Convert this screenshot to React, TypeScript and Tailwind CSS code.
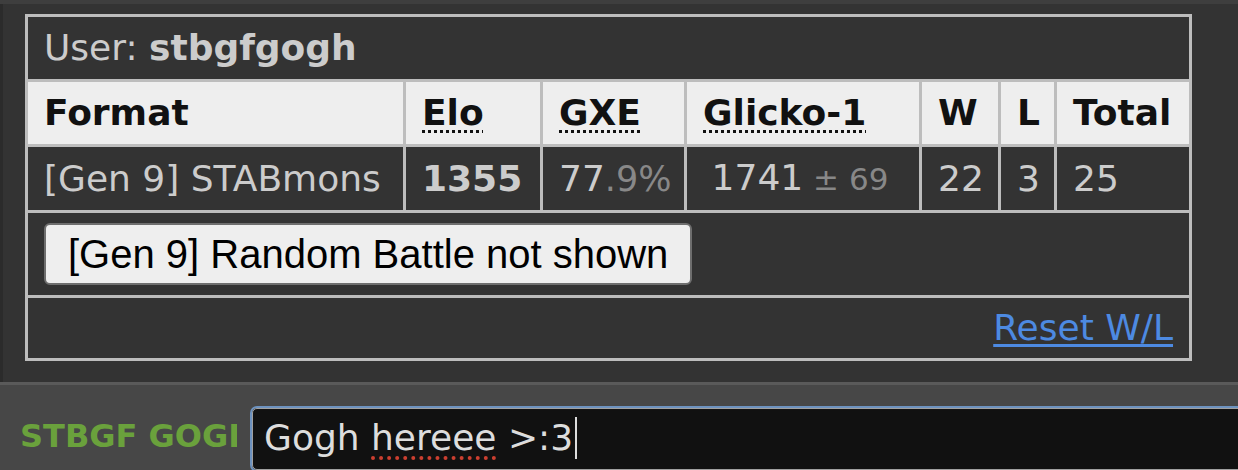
import React from "react";

const cols = [378, 137, 144, 235, 79, 56, 135];

function Abbr({ children }: { children: React.ReactNode }) {
  return (
    <span className="underline decoration-dotted decoration-[3px] underline-offset-[5px]">
      {children}
    </span>
  );
}

export default function App() {
  const th = "border-[3px] border-[#bdbdbd] bg-[#eeeeee] text-left font-bold text-[#111] pl-[16px] py-[10px]";
  const td = "border-[3px] border-[#bdbdbd] pl-[16px] py-[10px] whitespace-nowrap";

  return (
    <div className="h-[470px] w-[1238px] bg-[#333333] flex flex-col overflow-hidden font-['DejaVu_Sans',sans-serif]">
      <div className="h-[4px] bg-[#3e3e3e] shrink-0" />

      {/* ladder table */}
      <div className="flex-1 pl-[22px] pt-[10px] border-l-[3px] border-[#2b2b2b]">
        <table className="border-collapse table-fixed w-[1167px] text-[36px] leading-[42px] text-[#cccccc]">
          <colgroup>
            {cols.map((w, i) => (
              <col key={i} style={{ width: w }} />
            ))}
          </colgroup>
          <tbody>
            <tr>
              <td colSpan={7} className={td}>
                User: <strong>stbgfgogh</strong>
              </td>
            </tr>
            <tr>
              <th className={th}>Format</th>
              <th className={th}><Abbr>Elo</Abbr></th>
              <th className={th}><Abbr>GXE</Abbr></th>
              <th className={th}><Abbr>Glicko-1</Abbr></th>
              <th className={th}>W</th>
              <th className={th}>L</th>
              <th className={th}>Total</th>
            </tr>
            <tr>
              <td className={td}>[Gen 9] STABmons</td>
              <td className={td + " font-bold"}>1355</td>
              <td className={td}>
                77<span className="text-[#888888] text-[35px]">.9%</span>
              </td>
              <td className={td + " text-center !pl-0 !pr-[6px]"}>
                1741<span className="text-[#888888] text-[31px]"> ± 69</span>
              </td>
              <td className={td}>22</td>
              <td className={td}>3</td>
              <td className={td}>25</td>
            </tr>
            <tr>
              <td colSpan={7} className={td}>
                <button className="h-[62px] rounded-[6px] border-2 border-[#6e6e6e] bg-[#eeeeee] px-[22px] font-['Liberation_Sans',Arial,sans-serif] text-[40px] leading-[46px] text-black">
                  [Gen 9] Random Battle not shown
                </button>
              </td>
            </tr>
            <tr>
              <td colSpan={7} className={td + " text-right pr-[16px] !py-[9px]"}>
                <a className="text-[#4d8ae2] underline decoration-[3px] underline-offset-[4px]">Reset W/L</a>
              </td>
            </tr>
          </tbody>
        </table>
      </div>

      {/* chat input bar */}
      <div className="h-[88px] shrink-0 border-t-[3px] border-[#5a5a5a] bg-[#474747] pt-[21px] flex items-start overflow-hidden">
        <div className="ml-[20px] mt-[12px] w-[217px] shrink-0 overflow-hidden whitespace-nowrap text-[32px] leading-[37px] font-bold text-[#6aa13c]">
          STBGF GOGH
        </div>
        <div className="ml-[13px] w-[1040px] shrink-0 rounded-[7px] border-2 border-[#6d92bf]">
          <div className="h-[62px] rounded-[5px] border border-[#a0a0a0] bg-[#111111] pl-[11px] pt-[8px] text-[36px] leading-[42px] text-[#dddddd] whitespace-nowrap">
            Gogh{" "}
            <span className="underline decoration-dotted decoration-[#cc3f30] decoration-[4px] underline-offset-[6px]">
              hereee
            </span>{" "}
            &gt;:3
            <span className="inline-block w-[2px] h-[42px] bg-[#dddddd] align-top ml-[2px]" />
          </div>
        </div>
      </div>
    </div>
  );
}
